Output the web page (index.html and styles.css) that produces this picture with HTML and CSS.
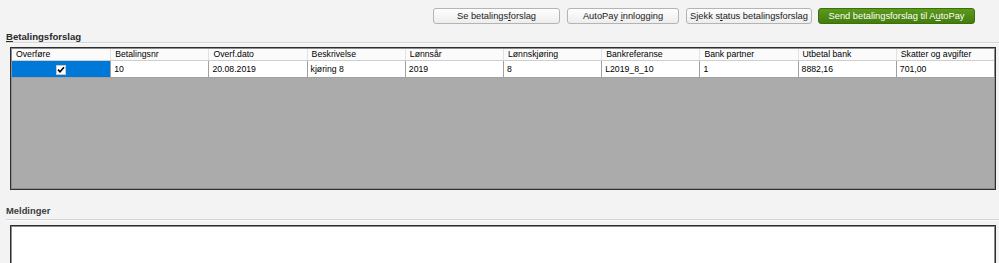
FILE: index.html
```html
<!DOCTYPE html>
<html lang="no">
<head>
<meta charset="utf-8">
<title>Betalingsforslag</title>
<link rel="stylesheet" href="styles.css">
</head>
<body>
<div class="toolbar">
  <button class="btn btn-1">Se betalings<u>f</u>orslag</button>
  <button class="btn btn-2">AutoPay <u>i</u>nnlogging</button>
  <button class="btn btn-3">Sjekk s<u>t</u>atus betalingsforslag</button>
  <button class="btn btn-4 btn-green">Send betalingsforslag til A<u>u</u>toPay</button>
</div>

<div class="section-head head-top"><u>B</u>etalingsforslag</div>

<div class="grid">
  <div class="grid-row grid-header">
    <div class="cell">Overføre</div>
    <div class="cell">Betalingsnr</div>
    <div class="cell">Overf.dato</div>
    <div class="cell">Beskrivelse</div>
    <div class="cell">Lønnsår</div>
    <div class="cell">Lønnskjøring</div>
    <div class="cell">Bankreferanse</div>
    <div class="cell">Bank partner</div>
    <div class="cell">Utbetal bank</div>
    <div class="cell">Skatter og avgifter</div>
  </div>
  <div class="grid-row grid-data">
    <div class="cell cell-selected">
      <span class="checkbox">
        <svg width="8" height="8" viewBox="0 0 8 8"><path d="M1 3.6 L3 5.8 L7 1.2" fill="none" stroke="#000" stroke-width="1.6"/></svg>
      </span>
    </div>
    <div class="cell">10</div>
    <div class="cell">20.08.2019</div>
    <div class="cell">kjøring 8</div>
    <div class="cell">2019</div>
    <div class="cell">8</div>
    <div class="cell">L2019_8_10</div>
    <div class="cell">1</div>
    <div class="cell">8882,16</div>
    <div class="cell">701,00</div>
  </div>
  <div class="grid-empty"></div>
</div>

<div class="section-head head-msg">Meldinger</div>
<div class="messages"></div>
</body>
</html>
```

FILE: styles.css
```css
html, body {
  margin: 0;
  padding: 0;
}
body {
  background: #f3f3f3;
  font-family: "Liberation Sans", Arial, sans-serif;
  color: #000;
  width: 999px;
  height: 263px;
  overflow: hidden;
}

.toolbar {
  height: 32px;
  display: flex;
  justify-content: flex-end;
  align-items: flex-start;
  padding-right: 24px;
  box-sizing: border-box;
}
.btn {
  margin-top: 8px;
  height: 16px;
  padding: 0;
  box-sizing: border-box;
  border: 1px solid #b4b4b4;
  border-radius: 3px;
  background: linear-gradient(#fefefe, #ededed);
  font-family: "Liberation Sans", Arial, sans-serif;
  font-size: 9.3px;
  line-height: 14px;
  color: #222;
  text-align: center;
  margin-left: 7px;
}
.btn u { text-decoration-thickness: 1px; text-underline-offset: 1px; }
.btn-1 { width: 127px; }
.btn-2 { width: 112px; }
.btn-3 { width: 126px; }
.btn-4 { width: 157px; margin-left: 6px; }
.btn-green {
  background: linear-gradient(#5c9a1c, #437d0c);
  border-color: #3c6d0e;
  color: #fff;
}

.section-head {
  margin-left: 6px;
  padding-left: 0;
  font-weight: bold;
  font-size: 9.6px;
  border-bottom: 1px solid #d6d6d6;
  box-shadow: 0 1px 0 #fafafa;
}
.section-head u { text-decoration-thickness: 1px; text-underline-offset: 1px; }
.head-top {
  height: 10px;
  line-height: 10px;
  color: #2a2a2a;
}
.head-msg {
  margin-top: 14px;
  height: 14px;
  line-height: 14px;
  padding-bottom: 1px;
  color: #3c3c3c;
  font-size: 9.4px;
}

.grid {
  margin: 4px 0 0 10px;
  width: 986px;
  height: 143px;
  box-sizing: border-box;
  border: 1px solid #2f2f2f;
  box-shadow: inset 0 0 0 1px #8d8d8d;
  padding: 1px;
  display: flex;
  flex-direction: column;
  background: #ababab;
  font-size: 8.7px;
}
.grid-row {
  display: grid;
  grid-template-columns: repeat(10, 1fr);
}
.grid-header {
  height: 12px;
  background: #fbfbfb;
  border-bottom: 1px solid #cfcfcf;
  box-sizing: border-box;
}
.grid-header .cell {
  line-height: 11px;
  padding-left: 4px;
  border-left: 1px solid #e2e2e2;
}
.grid-header .cell:first-child { border-left: none; }
.grid-data {
  height: 17px;
  background: #fff;
  border-bottom: 1px solid #a0a0a0;
  box-sizing: border-box;
}
.grid-data .cell {
  line-height: 16px;
  padding-left: 3px;
  border-left: 1px solid #a0a0a0;
}
.grid-data .cell:first-child { border-left: none; }
.cell {
  white-space: nowrap;
  overflow: hidden;
}
.grid-data .cell-selected {
  background: #0078d7;
  display: flex;
  justify-content: center;
  align-items: center;
  padding-left: 0;
}
.checkbox {
  width: 10px;
  height: 10px;
  box-sizing: border-box;
  background: #fff;
  border: 1px solid #c8c8c8;
  display: flex;
  align-items: center;
  justify-content: center;
  margin-top: 1px;
}
.grid-empty {
  flex: 1;
  background: #ababab;
}

.messages {
  margin: 5px 0 0 10px;
  width: 986px;
  height: 38px;
  box-sizing: border-box;
  border: 1px solid #2f2f2f;
  border-bottom: none;
  box-shadow: inset 1px 1px 0 #8d8d8d, inset -1px 0 0 #8d8d8d;
  background: #fff;
}
```
